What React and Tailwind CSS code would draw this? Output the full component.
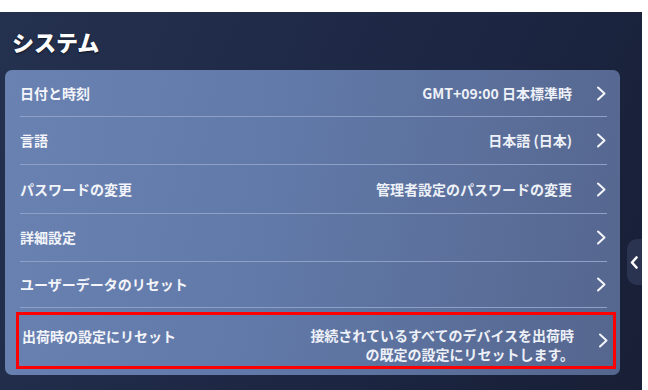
import React from "react";

const font = { fontFamily: '"Noto Sans CJK JP", "Noto Sans", sans-serif' };

function Chevron() {
  return (
    <svg width="10" height="15" viewBox="0 0 10 15" className="shrink-0">
      <polyline points="2,1.5 8.5,7.5 2,13.5" fill="none" stroke="#f4f6fb" strokeWidth="2" strokeLinecap="round" strokeLinejoin="round" />
    </svg>
  );
}

function Row({ label, value, h }) {
  return (
    <div className={`flex items-center justify-between border-b border-[#8fa0c6] ${h}`}>
      <span className="text-[14px] font-bold text-[#f3f5fa]">{label}</span>
      <div className="flex items-center gap-[24px] pr-[1px]">
        {value && <span className="text-[14px] font-bold text-[#eef1f8]">{value}</span>}
        <Chevron />
      </div>
    </div>
  );
}

export default function App() {
  return (
    <div className="w-[648px] h-[390px] bg-white pt-[12px] pr-[6px] overflow-hidden" style={font}>
      <div className="w-[642px] h-[378px] flex flex-col bg-[linear-gradient(115deg,#24314f_0%,#1d2744_55%,#181f36_100%)]">
        <div className="h-[58px] flex items-center pl-[12px]">
          <span className="text-[22px] font-black text-white [text-shadow:0_1px_2px_rgba(0,0,0,0.6)]">システム</span>
        </div>
        <div className="flex items-start">
          <div className="ml-[5px] w-[615px] h-[305px] rounded-[7px] bg-[linear-gradient(100deg,#6a82b2_0%,#6179a8_45%,#55668e_100%)] pt-0 pb-[6px]">
            <div className="pl-[15px] pr-[13px]">
              <Row label="日付と時刻" value="GMT+09:00 日本標準時" h="h-[47px]" />
              <Row label="言語" value="日本語 (日本)" h="h-[48px]" />
              <Row label="パスワードの変更" value="管理者設定のパスワードの変更" h="h-[49px]" />
              <Row label="詳細設定" value="" h="h-[48px]" />
              <Row label="ユーザーデータのリセット" value="" h="h-[46px]" />
            </div>
            <div className="mt-[4px] ml-[11px] mr-[4px] h-[57px] border-[3px] border-[#ff0000] flex justify-between pl-[3px] pr-[5px]">
              <span className="text-[14px] font-bold text-[#f3f5fa] pt-[11px] leading-[20px]">出荷時の設定にリセット</span>
              <div className="flex items-start gap-[24px]">
                <div className="flex flex-col items-end pt-[10px] text-[14px] font-bold text-[#eef1f8] leading-[20px]">
                  <span>接続されているすべてのデバイスを出荷時</span>
                  <span className="-mt-[1px]">の既定の設定にリセットします。</span>
                </div>
                <div className="pt-[18px]">
                  <Chevron />
                </div>
              </div>
            </div>
          </div>
          <div className="ml-[7px] mt-[169px] w-[15px] h-[46px] rounded-l-[10px] bg-[#2a3350] flex items-center justify-center">
            <svg width="9" height="13" viewBox="0 0 9 13">
              <polyline points="6.5,1.5 2,6.5 6.5,11.5" fill="none" stroke="#ffffff" strokeWidth="2.6" strokeLinecap="round" strokeLinejoin="round" />
            </svg>
          </div>
        </div>
      </div>
    </div>
  );
}
